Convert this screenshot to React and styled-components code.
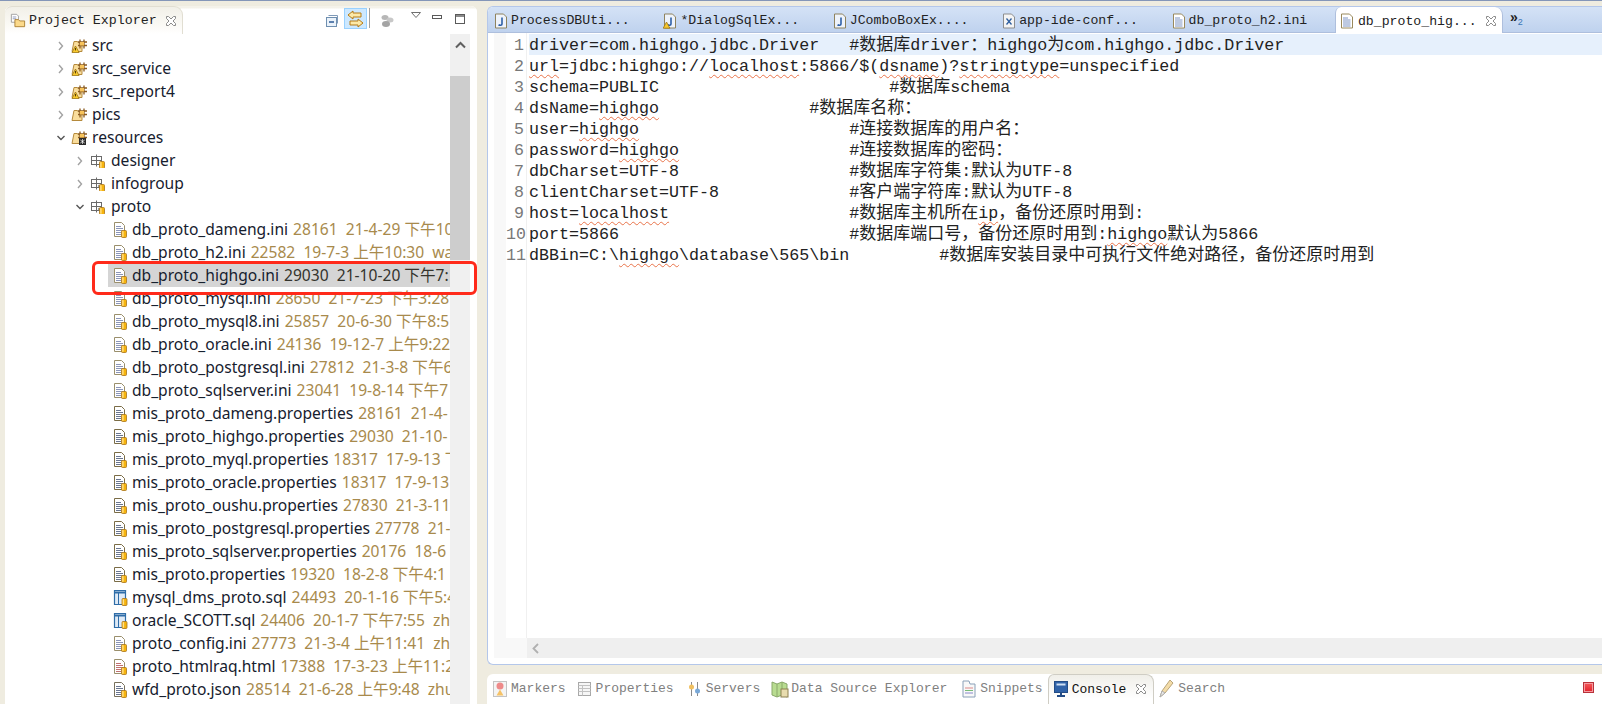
import styled, { createGlobalStyle } from "styled-components";

const GlobalStyle = createGlobalStyle`
  html, body {
    margin: 0;
    padding: 0;
    background: #efece0;
  }
`;

const MONO = `"Liberation Mono", "Noto Sans CJK SC", monospace`;

const Page = styled.div`
  width: 1602px;
  height: 704px;
  overflow: hidden;
  display: flex;
  flex-direction: column;
  background: #efece0;
`;

const TopLine = styled.div`
  height: 1px;
  flex: none;
  background: #8496b8;
`;

const Workspace = styled.div`
  flex: 1;
  display: flex;
  gap: 10px;
  padding: 5px 0 0 5px;
  min-height: 0;
`;

/* left panel */
const ExplorerPanel = styled.section`
  position: relative;
  width: 472px;
  flex: none;
  display: flex;
  flex-direction: column;
  background: #fff;
  border-radius: 6px 6px 0 0;
`;

const ExplorerHeader = styled.header`
  height: 28px;
  flex: none;
  display: flex;
  background: linear-gradient(#f4f2ea, #f4f2ea 2px, #fff 3px);
  border-radius: 6px 6px 0 0;
`;

const ExplorerTab = styled.div`
  width: 178px;
  height: 28px;
  flex: none;
  box-sizing: border-box;
  display: flex;
  align-items: center;
  padding: 0 0 0 5px;
  gap: 3px;
  font: 13.3px ${MONO};
  color: #222;
  white-space: pre;
  border-radius: 7px 9px 0 0;
  background: linear-gradient(#f2f0e8, #fbfaf6 70%, #fff);
  border-top: 1px solid #e1ded2;
  border-right: 1px solid #e1ded2;
`;

const HeaderTools = styled.div`
  flex: 1;
  display: flex;
  align-items: flex-start;
  padding: 2px 0 0 142px;
`;

const LinkButton = styled.div`
  width: 23px;
  height: 21px;
  margin-left: 5px;
  display: flex;
  align-items: center;
  justify-content: center;
  background: #cce8ff;
  border: 1px solid #99d1ff;
  box-sizing: border-box;
`;

const ToolSeparator = styled.div`
  width: 1px;
  height: 20px;
  margin: 0 10px 0 2px;
  background: #a0a0a0;
`;

const ToolSlot = styled.div`
  margin-left: ${(p) => p.$gap}px;
  margin-top: ${(p) => p.$top}px;
  display: flex;
`;

const ExplorerBody = styled.div`
  flex: 1;
  min-height: 0;
  display: flex;
  padding-right: 7px;
`;

const Tree = styled.ul`
  width: 445px;
  flex: none;
  margin: 0;
  padding: 0;
  list-style: none;
  overflow: hidden;
`;

const TreeRow = styled.li`
  height: 23px;
  display: flex;
  align-items: center;
  padding-left: ${(p) => p.$indent}px;
  white-space: pre;
  font: 15.6px "Noto Sans", "Noto Sans CJK SC", sans-serif;
  color: #16202e;
`;

const Twisty = styled.span`
  width: 13px;
  margin-right: 1px;
  flex: none;
  display: flex;
`;

const TreeIcon = styled.span`
  width: 19px;
  flex: none;
  display: flex;
`;

const RowLabel = styled.span`
  margin-left: ${(p) => p.$gap}px;
  padding-left: ${(p) => p.$pad}px;
  height: 23px;
  flex: 1;
  display: flex;
  align-items: center;
  background: ${(p) => (p.$selected ? "#d5d5d5" : "transparent")};
  overflow: hidden;
`;

const RowText = styled.span`
  line-height: 20px;
  margin-bottom: 2px;
`;

const Decoration = styled.span`
  color: ${(p) => (p.$selected ? "#33332c" : "#a88a4c")};
  margin-left: 5px;
`;

const VScroll = styled.div`
  width: 20px;
  flex: none;
  display: flex;
  flex-direction: column;
  background: #f0f0f0;
`;

const ScrollUp = styled.div`
  height: 42px;
  flex: none;
  display: flex;
  justify-content: center;
  padding-top: 7px;
  box-sizing: border-box;
`;

const ScrollThumb = styled.div`
  height: 184px;
  flex: none;
  background: #cdcdcd;
`;

const RedMark = styled.div`
  position: absolute;
  left: 87px;
  top: 255px;
  width: 385px;
  height: 34px;
  box-sizing: border-box;
  border: 3px solid #ff2a1a;
  border-radius: 6px;
  pointer-events: none;
`;

/* right side */
const RightColumn = styled.div`
  flex: 1;
  min-width: 0;
  display: flex;
  flex-direction: column;
`;

const EditorPanel = styled.section`
  height: 659px;
  flex: none;
  box-sizing: border-box;
  display: flex;
  flex-direction: column;
  background: #fff;
  border: 1px solid #b4c7ea;
  border-right: none;
  border-radius: 6px 0 0 6px;
  overflow: hidden;
`;

const EditorTabs = styled.div`
  height: 26px;
  flex: none;
  display: flex;
  box-sizing: border-box;
  background: linear-gradient(#d4e2f6, #bfd2ee);
  border-bottom: 1px solid #aebfdd;
`;

const EditorTab = styled.div`
  width: ${(p) => (p.$active ? 168 : 169.4)}px;
  height: ${(p) => (p.$active ? 26 : 25)}px;
  flex: none;
  box-sizing: border-box;
  display: flex;
  align-items: center;
  gap: ${(p) => (p.$active ? 4 : 3)}px;
  padding: 2px 0 0 ${(p) => (p.$active ? 4 : 6)}px;
  font: 13.2px ${MONO};
  color: #222;
  white-space: pre;
  background: ${(p) => (p.$active ? "#fff" : "transparent")};
  border-radius: ${(p) => (p.$active ? "6px 8px 0 0" : "0")};
  border-right: ${(p) => (p.$active ? "1px solid #aebfdd" : "none")};
  border-left: ${(p) => (p.$active ? "1px solid #aebfdd" : "none")};
`;

const TabClose = styled.span`
  margin-left: ${(p) => p.$gap}px;
  display: flex;
`;

const MoreTabs = styled.span`
  margin: 3px 0 0 7px;
  font: bold 14px "Liberation Sans", sans-serif;
  color: #222;
  display: flex;
  align-items: flex-start;
  line-height: 14px;
  sub {
    font: 9px "Liberation Sans", sans-serif;
    color: #3a78b8;
    margin-top: 7px;
  }
`;

const EditorBody = styled.div`
  flex: 1;
  min-height: 0;
  display: flex;
  padding: 0 0 0 6px;
`;

const Ruler = styled.div`
  width: 12px;
  flex: none;
  background: #f8f8f8;
`;

const LineNumbers = styled.div`
  width: 21px;
  flex: none;
  box-sizing: border-box;
  padding: 1px 2px 0 0;
  text-align: right;
  border-right: 1px solid #f0f0f0;
  font: 16.6px/23px ${MONO};
  color: #787878;
  div {
    height: 21px;
  }
`;

const CodeArea = styled.div`
  flex: 1;
  min-width: 0;
  padding: 1px 0 0 2px;
  overflow: hidden;
`;

const CodeLine = styled.div`
  height: 21px;
  font: 16.68px/23px ${MONO};
  color: #222;
  white-space: pre;
  background: ${(p) => (p.$current ? "#e6f0fc" : "transparent")};
`;

const Squiggle = styled.span`
  text-decoration: underline wavy #e9744a 1px;
  text-underline-offset: 3px;
`;

const Cjk = styled.span`
  font-size: 17px;
`;

const HScrollRow = styled.div`
  height: 20px;
  flex: none;
  display: flex;
  margin: 0 0 6px 6px;
  background: #f8f8f8;
`;

const HScroll = styled.div`
  flex: 1;
  margin-left: 33px;
  display: flex;
  align-items: center;
  padding-left: 5px;
  background: #efefef;
`;

const BottomPanel = styled.section`
  height: 31px;
  flex: none;
  margin-top: 9px;
  display: flex;
  align-items: flex-start;
  background: #fff;
  border-radius: 6px 0 0 0;
  position: relative;
`;

const ViewTab = styled.div`
  height: 31px;
  flex: none;
  box-sizing: border-box;
  display: flex;
  align-items: center;
  gap: ${(p) => p.$gap}px;
  padding: 0 ${(p) => p.$right}px 2px ${(p) => p.$left}px;
  font: 13px ${MONO};
  color: ${(p) => (p.$active ? "#111" : "#808080")};
  white-space: pre;
  ${(p) =>
    p.$active &&
    `
    background: linear-gradient(#f0efe9, #fff 80%);
    border: 1px solid #cfcdc4;
    border-bottom: none;
    border-radius: 6px 8px 0 0;
  `}
`;

const StopButton = styled.div`
  margin: 8px 8px 0 auto;
  width: 11px;
  height: 11px;
  box-sizing: border-box;
  background: linear-gradient(#f45a5a, #e3202a);
  border: 1px solid #b8323a;
  box-shadow: inset 0 0 0 1px #f59aa0;
`;

/* icons */
const CloseIcon = () => (
  <svg width="12" height="12" viewBox="0 0 12 12">
    <path
      d="M1.5 1.5h2l2.5 2.5 2.5-2.5h2v2L8 6l2.5 2.5v2h-2L6 8l-2.5 2.5h-2v-2L4 6 1.5 3.5z"
      fill="#fff"
      stroke="#8b8b8b"
    />
  </svg>
);

const Chevron = ({ open }) => (
  <svg width="8" height="10" viewBox="0 0 8 10">
    {open ? (
      <path d="M0.5 3l3.5 3.5L7.5 3" fill="none" stroke="#555" strokeWidth="1.4" />
    ) : (
      <path d="M2 1l3.5 4L2 9" fill="none" stroke="#a2a2a2" strokeWidth="1.4" />
    )}
  </svg>
);

const Can = ({ x = 9, y = 9 }) => (
  <g>
    <rect x={x} y={y} width="5" height="7" rx="1" fill="#f6b40e" stroke="#a8741a" strokeWidth="0.8" />
    <rect x={x + 0.7} y={y + 0.7} width="1.4" height="5.5" fill="#ffe08a" />
  </g>
);

const SourceFolderIcon = ({ warn, bound }) => (
  <svg width="17" height="15" viewBox="0 0 17 15">
    <path d="M1 13.5L3 3.5h3.5l1 1.5H11v8.5z" fill="#f9dd9c" stroke="#b58a3c" />
    <path d="M9 1.5v9M13 1.5v9M7 4h9M7 7.5h9" stroke="#8a5a1e" strokeWidth="1.3" fill="none" />
    <rect x="9" y="4" width="4" height="3.5" fill="#f7c35a" />
    {warn && <path d="M4.5 8l3.6 6.5H1z" fill="#f8c92e" stroke="#9b7412" strokeWidth="0.8" />}
    {warn && <path d="M4.5 10v2.4" stroke="#553d07" strokeWidth="1" />}
    {bound && <rect x="8" y="8" width="7" height="7" fill="#2a2a2a" />}
    {bound && <path d="M11.5 9v5M9.3 10l4.4 3M13.7 10l-4.4 3" stroke="#fff" strokeWidth="0.7" />}
  </svg>
);

const PackageIcon = ({ dotted }) => (
  <svg width="15" height="14" viewBox="0 0 15 14">
    <rect x="1.5" y="2.5" width="10" height="8" fill="#fff" stroke="#6a6a6a" />
    <path d="M6.5 0.5v12M1.5 6.5h10" stroke="#6a6a6a" fill="none" />
    {dotted && <circle cx="9" cy="9" r="1.2" fill="#9a9a9a" />}
    <Can x={9.5} y={7.5} />
  </svg>
);

const TONES = {
  ini: { line: "#8b95b8", edge: "#9a8f6c" },
  props: { line: "#6a7690", edge: "#7a6c46" },
  html: { line: "#c07070", edge: "#9a8f6c" },
  json: { line: "#6a7690", edge: "#77705c" },
};

const FileIcon = ({ kind = "ini" }) => (
  <svg width="14" height="17" viewBox="0 0 14 17">
    <path d="M1.5 1.5h7l3 3v11h-10z" fill="#fff" stroke={TONES[kind].edge} />
    <path
      d="M3 5.5h5M3 7.5h7M3 9.5h7M3 11.5h5M3 13.5h5"
      stroke={TONES[kind].line}
      strokeWidth="1"
    />
    <Can x={8.5} y={9.5} />
  </svg>
);

const SqlIcon = () => (
  <svg width="15" height="17" viewBox="0 0 15 17">
    <path d="M1.5 1.5h11v14h-11z" fill="#dfeaf6" stroke="#2f6da8" strokeWidth="1.2" />
    <path d="M1.5 3.5h11" stroke="#2f6da8" strokeWidth="2" />
    <path d="M5.5 4v11" stroke="#2f6da8" />
    <Can x={9} y={9.5} />
  </svg>
);

const ExplorerIcon = () => (
  <svg width="16" height="15" viewBox="0 0 18 17">
    <path d="M1.5 1.5h6l2 2v7h-8z" fill="#fff" stroke="#9a9a9a" />
    <path d="M3 4.5h4M3 6.5h4" stroke="#8b95b8" />
    <path d="M5.5 15.5V7.5h4l1.5 1.5h5.5v6.5z" fill="#fbd98a" stroke="#a87c2f" />
  </svg>
);

const JavaFileIcon = ({ warn }) => (
  <svg width="14" height="16" viewBox="0 0 14 16">
    <path d="M1.5 1h8l3 3v11h-11z" fill="#eef3fb" stroke="#8f835e" />
    <path d="M8 4.5v6.5c0 1.6-2.5 1.6-3.4.6" fill="none" stroke="#2c5fa8" strokeWidth="1.6" />
    {warn && <path d="M3.5 9l3.4 6.2H0.2z" fill="#f8c92e" stroke="#9b7412" strokeWidth="0.8" />}
  </svg>
);

const XmlFileIcon = () => (
  <svg width="14" height="16" viewBox="0 0 14 16">
    <path d="M1.5 1h8l3 3v11h-11z" fill="#f4f4f4" stroke="#8d8d8d" />
    <path d="M4.5 5.5l5 6M9.5 5.5l-5 6" stroke="#2f5f9f" strokeWidth="1.3" />
  </svg>
);

const IniTabIcon = () => (
  <svg width="14" height="16" viewBox="0 0 14 16">
    <path d="M1.5 1h8l3 3v11h-11z" fill="#fff" stroke="#99895c" />
    <path d="M3 5h5M3 7h7.5M3 9h7.5M3 11h7.5M3 13h7.5" stroke="#7d94c4" />
  </svg>
);

const CollapseIcon = () => (
  <svg width="14" height="14" viewBox="0 0 14 14">
    <path d="M3.5 1.5h9v8" fill="none" stroke="#7f9ab8" />
    <rect x="1.5" y="3.5" width="10" height="9" fill="#eaf2fa" stroke="#6f8fb0" />
    <path d="M4 8h5" stroke="#1f4f8f" strokeWidth="1.4" />
  </svg>
);

const LinkIcon = () => (
  <svg width="17" height="18" viewBox="0 0 17 18">
    <path d="M6 1L1 5l5 4V7h8V3H6z" fill="#fce9a8" stroke="#b57a14" />
    <path d="M11 9l5 4-5 4v-2H3v-4h8z" fill="#fce9a8" stroke="#b57a14" />
  </svg>
);

const GreyStackIcon = () => (
  <svg width="14" height="14" viewBox="0 0 14 14">
    <ellipse cx="5" cy="3.5" rx="3.5" ry="2.5" fill="#b7b7b7" />
    <ellipse cx="10" cy="6" rx="3.5" ry="2.5" fill="#c8c8c8" />
    <ellipse cx="6" cy="10" rx="4" ry="3" fill="#a4a4a4" />
  </svg>
);

const MenuArrow = () => (
  <svg width="10" height="6" viewBox="0 0 10 6">
    <path d="M0.5 0.5h9L5 5.5z" fill="#fff" stroke="#707070" />
  </svg>
);

const MinIcon = () => (
  <svg width="10" height="4" viewBox="0 0 10 4">
    <rect x="0.5" y="0.5" width="9" height="3" fill="#fff" stroke="#5a5a5a" />
  </svg>
);

const MaxIcon = () => (
  <svg width="10" height="10" viewBox="0 0 10 10">
    <rect x="0.5" y="0.5" width="9" height="9" fill="#fff" stroke="#5a5a5a" />
    <path d="M0.5 2h9" stroke="#5a5a5a" strokeWidth="1.4" />
  </svg>
);

const ScrollUpIcon = () => (
  <svg width="11" height="8" viewBox="0 0 11 8">
    <path d="M1 6.5l4.5-4.5L10 6.5" fill="none" stroke="#606060" strokeWidth="2" />
  </svg>
);

const ScrollLeftIcon = () => (
  <svg width="7" height="11" viewBox="0 0 7 11">
    <path d="M6 1L1.5 5.5 6 10" fill="none" stroke="#b0b0b0" strokeWidth="1.8" />
  </svg>
);

const MarkersIcon = () => (
  <svg width="15" height="18" viewBox="0 0 15 18">
    <rect x="0.5" y="1.5" width="13" height="15" fill="#f4f4f4" stroke="#c4c4c4" />
    <circle cx="7" cy="6" r="3.5" fill="#ee8a8a" />
    <path d="M7 9.5l3.5 6h-7z" fill="#f5c267" />
  </svg>
);

const PropertiesIcon = () => (
  <svg width="13" height="14" viewBox="0 0 13 14">
    <rect x="0.5" y="0.5" width="12" height="13" fill="#f6f6f6" stroke="#a8a8a8" />
    <path d="M0.5 3.5h12M0.5 6.5h12M0.5 9.5h12M4.5 3.5v10" stroke="#c2c2c2" />
  </svg>
);

const ServersIcon = () => (
  <svg width="13" height="16" viewBox="0 0 13 16">
    <path d="M3.5 1v14M9.5 1v14" stroke="#8a8a8a" />
    <circle cx="3.5" cy="6" r="2.5" fill="#f0c060" />
    <circle cx="9.5" cy="10" r="2.5" fill="#78a8d8" />
  </svg>
);

const SourceExplorerIcon = () => (
  <svg width="18" height="18" viewBox="0 0 18 18">
    <path d="M1 2l5 2 5-2 5 2v13l-5-2-5 2-5-2z" fill="#b8dc90" stroke="#8aa86a" />
    <path d="M6 4v13M11 2v13" stroke="#8aa86a" />
    <rect x="10" y="9" width="7" height="8" fill="#e8dcae" stroke="#8c8050" />
  </svg>
);

const SnippetsIcon = () => (
  <svg width="14" height="18" viewBox="0 0 14 18">
    <path d="M1 1h6l1 3h5v13H1z" fill="#f8f8f8" stroke="#8aa0b8" />
    <path d="M3 8h8" stroke="#d88" />
    <path d="M3 10.5h8" stroke="#7b7" />
    <path d="M3 13h8" stroke="#88c" />
  </svg>
);

const ConsoleIcon = () => (
  <svg width="14" height="17" viewBox="0 0 14 17">
    <rect x="0.5" y="0.5" width="13" height="11" fill="#2f62a8" stroke="#234c86" />
    <rect x="2.5" y="2.5" width="9" height="2" fill="#cfe0f4" />
    <path d="M7 12v2" stroke="#234c86" strokeWidth="2" />
    <path d="M3 15h8" stroke="#234c86" strokeWidth="2" />
  </svg>
);

const SearchIcon = () => (
  <svg width="18" height="20" viewBox="0 0 18 20">
    <path d="M13 1l3 3-8 10-5 4 2-6z" fill="#f3dca8" stroke="#b9a478" />
    <path d="M3 18l2-6 3 2z" fill="#e8e8e8" stroke="#b0b0b0" />
  </svg>
);

/* data */
const TOP_ROWS = [
  { name: "src", warn: true },
  { name: "src_service", warn: true },
  { name: "src_report4", warn: true },
  { name: "pics" },
  { name: "resources", open: true, bound: true },
];

const PACKAGES = [
  { name: "designer" },
  { name: "infogroup", dotted: true },
  { name: "proto", open: true, dotted: true },
];

const FILES = [
  ["db_proto_dameng.ini", "28161  21-4-29 下午10"],
  ["db_proto_h2.ini", "22582  19-7-3 上午10:30  wa"],
  ["db_proto_highgo.ini", "29030  21-10-20 下午7:", "ini", true],
  ["db_proto_mysql.ini", "28650  21-7-23 下午3:28"],
  ["db_proto_mysql8.ini", "25857  20-6-30 下午8:5"],
  ["db_proto_oracle.ini", "24136  19-12-7 上午9:22"],
  ["db_proto_postgresql.ini", "27812  21-3-8 下午6"],
  ["db_proto_sqlserver.ini", "23041  19-8-14 下午7"],
  ["mis_proto_dameng.properties", "28161  21-4-", "props"],
  ["mis_proto_highgo.properties", "29030  21-10-", "props"],
  ["mis_proto_myql.properties", "18317  17-9-13 下", "props"],
  ["mis_proto_oracle.properties", "18317  17-9-13", "props"],
  ["mis_proto_oushu.properties", "27830  21-3-11", "props"],
  ["mis_proto_postgresql.properties", "27778  21-", "props"],
  ["mis_proto_sqlserver.properties", "20176  18-6", "props"],
  ["mis_proto.properties", "19320  18-2-8 下午4:1", "props"],
  ["mysql_dms_proto.sql", "24493  20-1-16 下午5:4", "sql"],
  ["oracle_SCOTT.sql", "24406  20-1-7 下午7:55  zh", "sql"],
  ["proto_config.ini", "27773  21-3-4 上午11:41  zh"],
  ["proto_htmlraq.html", "17388  17-3-23 上午11:2", "html"],
  ["wfd_proto.json", "28514  21-6-28 上午9:48  zhu", "json"],
];

const EDITOR_TABS = [
  { label: "ProcessDBUti...", icon: <JavaFileIcon /> },
  { label: "*DialogSqlEx...", icon: <JavaFileIcon warn /> },
  { label: "JComboBoxEx....", icon: <JavaFileIcon /> },
  { label: "app-ide-conf...", icon: <XmlFileIcon /> },
  { label: "db_proto_h2.ini", icon: <IniTabIcon /> },
];

const LINES = [
  ["driver=com.highgo.jdbc.Driver", 32, "#数据库driver：highgo为com.highgo.jdbc.Driver"],
  ["{url}=jdbc:highgo://{localhost}:5866/$({dsname})?{stringtype}=unspecified", 0, ""],
  ["schema=PUBLIC", 36, "#数据库schema"],
  ["dsName={highgo}", 28, "#数据库名称："],
  ["user={highgo}", 32, "#连接数据库的用户名："],
  ["password={highgo}", 32, "#连接数据库的密码："],
  ["dbCharset=UTF-8", 32, "#数据库字符集:默认为UTF-8"],
  ["clientCharset=UTF-8", 32, "#客户端字符库:默认为UTF-8"],
  ["host={localhost}", 32, "#数据库主机所在{ip}，备份还原时用到:"],
  ["port=5866", 32, "#数据库端口号，备份还原时用到:{highgo}默认为5866"],
  ["dBBin=C:\\{highgo}\\database\\565\\bin", 41, "#数据库安装目录中可执行文件绝对路径，备份还原时用到"],
];

const plainLength = (s) => s.replace(/[{}]/g, "").length;

// the Chinese text sits a little wider than the mono cell size
const markCjk = (s) =>
  s.split(/([\u4e00-\u9fff\uff00-\uffef]+)/).map((part, i) =>
    i % 2 ? <Cjk key={i}>{part}</Cjk> : part
  );

// {word} in the line data means a spell-check squiggle
const markWords = (s) =>
  s.split(/(\{.+?\})/).map((part, i) =>
    part.startsWith("{") ? (
      <Squiggle key={i}>{part.slice(1, -1)}</Squiggle>
    ) : (
      <span key={i}>{markCjk(part)}</span>
    )
  );

const buildLine = ([code, col, comment]) => {
  if (!comment) return code;
  return code + " ".repeat(col - plainLength(code)) + comment;
};

const VIEW_TABS = [
  { label: "Markers", icon: <MarkersIcon />, left: 6, right: 9, gap: 3 },
  { label: "Properties", icon: <PropertiesIcon />, left: 3, right: 11, gap: 5 },
  { label: "Servers", icon: <ServersIcon />, left: 3, right: 9, gap: 5 },
  { label: "Data Source Explorer", icon: <SourceExplorerIcon />, left: 2, right: 11, gap: 2 },
  { label: "Snippets", icon: <SnippetsIcon />, left: 4, right: 5, gap: 4 },
];

function App() {
  return (
    <Page>
      <GlobalStyle />
      <TopLine />
      <Workspace>
        <ExplorerPanel>
          <ExplorerHeader>
            <ExplorerTab>
              <ExplorerIcon />
              Project Explorer
              <TabClose $gap={5}>
                <CloseIcon />
              </TabClose>
            </ExplorerTab>
            <HeaderTools>
              <ToolSlot $gap={0} $top={6}>
                <CollapseIcon />
              </ToolSlot>
              <LinkButton>
                <LinkIcon />
              </LinkButton>
              <ToolSeparator />
              <ToolSlot $gap={0} $top={6}>
                <GreyStackIcon />
              </ToolSlot>
              <ToolSlot $gap={17} $top={4}>
                <MenuArrow />
              </ToolSlot>
              <ToolSlot $gap={11} $top={7}>
                <MinIcon />
              </ToolSlot>
              <ToolSlot $gap={13} $top={6}>
                <MaxIcon />
              </ToolSlot>
            </HeaderTools>
          </ExplorerHeader>
          <ExplorerBody>
            <Tree>
              {TOP_ROWS.map((row) => (
                <TreeRow key={row.name} $indent={52}>
                  <Twisty>
                    <Chevron open={row.open} />
                  </Twisty>
                  <TreeIcon>
                    <SourceFolderIcon warn={row.warn} bound={row.bound} />
                  </TreeIcon>
                  <RowLabel $gap={2} $pad={0}>
                    <RowText>{row.name}</RowText>
                  </RowLabel>
                </TreeRow>
              ))}
              {PACKAGES.map((row) => (
                <TreeRow key={row.name} $indent={71}>
                  <Twisty>
                    <Chevron open={row.open} />
                  </Twisty>
                  <TreeIcon>
                    <PackageIcon dotted={row.dotted} />
                  </TreeIcon>
                  <RowLabel $gap={2} $pad={0}>
                    <RowText>{row.name}</RowText>
                  </RowLabel>
                </TreeRow>
              ))}
              {FILES.map(([name, info, kind, selected]) => (
                <TreeRow key={name} $indent={103}>
                  <RowLabel $gap={0} $pad={5} $selected={selected}>
                    <TreeIcon>
                      {kind === "sql" ? <SqlIcon /> : <FileIcon kind={kind} />}
                    </TreeIcon>
                    <RowText>
                      {name}
                      <Decoration $selected={selected}>{info}</Decoration>
                    </RowText>
                  </RowLabel>
                </TreeRow>
              ))}
            </Tree>
            <VScroll>
              <ScrollUp>
                <ScrollUpIcon />
              </ScrollUp>
              <ScrollThumb />
            </VScroll>
          </ExplorerBody>
          <RedMark />
        </ExplorerPanel>
        <RightColumn>
          <EditorPanel>
            <EditorTabs>
              {EDITOR_TABS.map((tab) => (
                <EditorTab key={tab.label}>
                  {tab.icon}
                  {tab.label}
                </EditorTab>
              ))}
              <EditorTab $active>
                <IniTabIcon />
                db_proto_hig...
                <TabClose $gap={4}>
                  <CloseIcon />
                </TabClose>
              </EditorTab>
              <MoreTabs>
                »<sub>2</sub>
              </MoreTabs>
            </EditorTabs>
            <EditorBody>
              <Ruler />
              <LineNumbers>
                {LINES.map((_, i) => (
                  <div key={i}>{i + 1}</div>
                ))}
              </LineNumbers>
              <CodeArea>
                {LINES.map((line, i) => (
                  <CodeLine key={i} $current={i === 0}>
                    {markWords(buildLine(line))}
                  </CodeLine>
                ))}
              </CodeArea>
            </EditorBody>
            <HScrollRow>
              <HScroll>
                <ScrollLeftIcon />
              </HScroll>
            </HScrollRow>
          </EditorPanel>
          <BottomPanel>
            {VIEW_TABS.map((tab) => (
              <ViewTab key={tab.label} $left={tab.left} $right={tab.right} $gap={tab.gap}>
                {tab.icon}
                {tab.label}
              </ViewTab>
            ))}
            <ViewTab $active $left={5} $right={6} $gap={4}>
              <ConsoleIcon />
              Console
              <TabClose $gap={5}>
                <CloseIcon />
              </TabClose>
            </ViewTab>
            <ViewTab $left={3} $right={0} $gap={3}>
              <SearchIcon />
              Search
            </ViewTab>
            <StopButton />
          </BottomPanel>
        </RightColumn>
      </Workspace>
    </Page>
  );
}

export default App;
